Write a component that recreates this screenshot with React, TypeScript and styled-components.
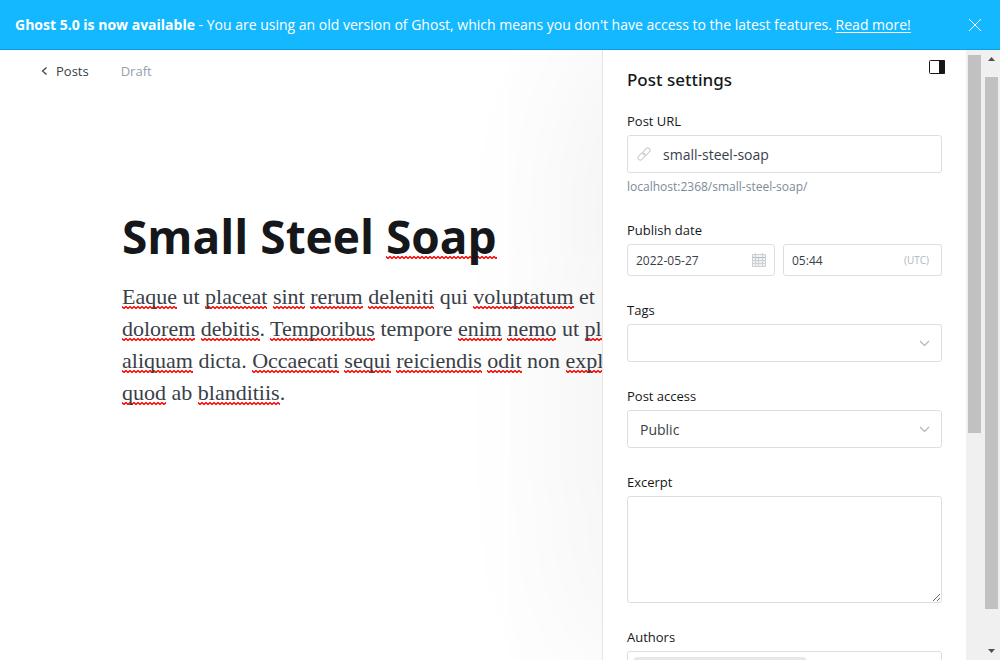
import React from "react";
import styled, { createGlobalStyle } from "styled-components";

const GlobalStyle = createGlobalStyle`
  *, *::before, *::after { box-sizing: border-box; }
  body {
    margin: 0;
    background: #fff;
    color: #15171a;
    font-family: "Open Sans", "Noto Sans", sans-serif;
    font-size: 13px;
  }
  button, input, select, textarea { font: inherit; color: inherit; }
`;

const Screen = styled.div`
  display: flex;
  flex-direction: column;
  height: 100vh;
  overflow: hidden;
`;

const Banner = styled.header`
  position: relative;
  z-index: 2;
  display: flex;
  align-items: center;
  justify-content: space-between;
  flex: none;
  height: 50px;
  padding: 0 18px 0 15px;
  background: #14b8ff;
  border-bottom: 1px solid #0c9fe0;
  color: #fff;
  font-size: 14px;
  white-space: nowrap;
`;

const BannerText = styled.p`
  margin: 0;
  line-height: 20px;
  a { color: inherit; text-underline-offset: 2px; }
`;

const IconButton = styled.button`
  display: flex;
  padding: 0;
  border: 0;
  background: none;
  cursor: pointer;
`;

const Workspace = styled.div`
  display: flex;
  flex: 1;
  min-height: 0;
`;

const Editor = styled.main`
  flex: 1;
  min-width: 0;
  overflow: hidden;
`;

const EditorNav = styled.nav`
  display: flex;
  align-items: center;
  gap: 32px;
  height: 42px;
  padding-left: 41px;
`;

const BackLink = styled.a`
  display: flex;
  align-items: center;
  gap: 8px;
  color: #394047;
  font-weight: 500;
  text-decoration: none;
`;

const Status = styled.span`
  color: #95a1ad;
`;

const Article = styled.article`
  padding: 112px 0 0 122px;
  white-space: nowrap;
`;

const Title = styled.h1`
  margin: 0;
  font-size: 46px;
  line-height: 64px;
  font-weight: 700;
`;

const Body = styled.p`
  margin: 13px 0 0;
  color: #394047;
  font-family: "Liberation Serif", serif;
  font-size: 22px;
  line-height: 32px;
`;

const Misspelt = styled.span<{ $rise?: number }>`
  background-image: url("data:image/svg+xml,%3Csvg xmlns='http://www.w3.org/2000/svg' width='4' height='3'%3E%3Cpath d='M-1 -.5L2 2.500L5 -.5' fill='none' stroke='red' stroke-width='1.4'/%3E%3C/svg%3E");
  background-repeat: repeat-x;
  background-position: left 0 bottom ${(p) => p.$rise ?? 0}px;
`;

const PanelGroup = styled.div`
  position: relative;
  z-index: 1;
  display: flex;
  box-shadow: 0 0 180px rgba(0, 0, 0, 0.08);
`;

const Panel = styled.aside`
  flex: none;
  width: 364px;
  overflow: hidden;
  background: #fff;
  border-left: 1px solid #e5e5e5;
`;

const PanelHeader = styled.div`
  display: flex;
  justify-content: space-between;
  align-items: flex-start;
  padding: 10px 21px 0 24px;
`;

const PanelTitle = styled.h2`
  margin: 8px 0 0;
  font-family: "Noto Sans", sans-serif;
  font-size: 17px;
  line-height: 24px;
  font-weight: 500;
`;

const Form = styled.form`
  display: flex;
  flex-direction: column;
  gap: 25px;
  padding: 20px 24px 0;
`;

const Field = styled.div`
  display: flex;
  flex-direction: column;
  gap: 5px;
`;

const Label = styled.label`
  font-size: 13px;
  line-height: 18px;
  font-weight: 500;
`;

const Control = styled.div<{ $small?: boolean }>`
  display: flex;
  align-items: center;
  gap: ${(p) => (p.$small ? 4 : 12)}px;
  height: ${(p) => (p.$small ? 32 : 38)}px;
  padding: ${(p) => (p.$small ? "0 8px" : "0 11px 0 9px")};
  border: 1px solid #dddedf;
  border-radius: 3px;
  color: #394047;
  font-size: ${(p) => (p.$small ? 12 : 14)}px;
`;

const TextInput = styled.input`
  flex: 1;
  min-width: 0;
  width: 100%;
  padding: 0;
  border: 0;
  outline: 0;
  background: none;
`;

const Select = styled.select`
  flex: 1;
  padding: 0 0 0 3px;
  border: 0;
  outline: 0;
  background: none;
  appearance: none;
`;

const Hint = styled.p`
  margin: 0;
  color: #7c8b9a;
  font-size: 12px;
  line-height: 18px;
`;

const DateRow = styled.div`
  display: grid;
  grid-template-columns: 148fr 159fr;
  gap: 8px;
`;

const Zone = styled.small`
  padding-right: 4px;
  color: #aeb7c1;
  font-size: 10px;
`;

const Excerpt = styled.textarea`
  display: block;
  height: 107px;
  border: 1px solid #dddedf;
  border-radius: 3px;
  outline: 0;
  resize: vertical;
`;

const AuthorBox = styled.div`
  height: 38px;
  padding: 5px 6px;
  border: 1px solid #dddedf;
  border-radius: 3px;
`;

const AuthorToken = styled.div`
  width: 172px;
  height: 26px;
  background: #e5e7e9;
  border-radius: 3px;
`;

const Track = styled.div<{ $arrows?: boolean }>`
  display: flex;
  flex-direction: column;
  align-items: center;
  gap: 16px;
  width: 17px;
  padding: ${(p) => (p.$arrows ? "7px 0" : "5px 0 0")};
  background: #f0f0f0;
  svg { flex: none; }
  svg:last-child { margin-top: auto; }
`;

const Thumb = styled.div<{ $share: number }>`
  flex: 0 0 ${(p) => p.$share}%;
  width: 13px;
  background: #c1c1c1;
`;

const Chevron = () => (
  <svg width="11" height="7" viewBox="0 0 11 7" fill="none" stroke="#aeb7c1" strokeWidth="1.2">
    <path d="M1 1 5.500 5.500 10 1" />
  </svg>
);

const LinkIcon = () => (
  <svg width="14" height="14" viewBox="0 0 14 14" fill="none" stroke="#c8ccd1">
    <rect x="-4" y="-2.300" width="8" height="4.600" rx="2.300" transform="translate(4.500 9.500) rotate(-45)" />
    <rect x="-4" y="-2.300" width="8" height="4.600" rx="2.300" transform="translate(9.500 4.500) rotate(-45)" />
  </svg>
);

const CalendarIcon = () => (
  <svg width="14" height="14" viewBox="0 0 14 14" fill="none" stroke="#cdd1d5">
    <path d="M.5 1.500h13v12H.5z" fill="#f1f2f3" />
    <path d="M.5 4.500h13" stroke="#b4bac0" />
    <path d="M3.500 0v13M6.500 5v8M10.500 0v13M1 7.500h12M1 10.500h12" />
  </svg>
);

const W = Misspelt;

export default function App() {
  return (
    <Screen>
      <GlobalStyle />
      <Banner>
        <BannerText>
          <b>Ghost 5.0 is now available</b> - You are using an old version of Ghost, which means you don't have access to
          the latest features. <a href="#read-more">Read more!</a>
        </BannerText>
        <IconButton type="button" aria-label="Close">
          <svg width="14" height="14" viewBox="0 0 14 14" stroke="#fff" fill="none">
            <path d="M1 1 13 13M13 1 1 13" />
          </svg>
        </IconButton>
      </Banner>
      <Workspace>
        <Editor>
          <EditorNav>
            <BackLink href="#posts">
              <svg width="7" height="8" viewBox="0 0 7 8" fill="none" stroke="#394047" strokeWidth="1.2">
                <path d="M5.5 .5 1.5 4 5.5 7.5" />
              </svg>
              Posts
            </BackLink>
            <Status>Draft</Status>
          </EditorNav>
          <Article>
            <Title>
              Small Steel <W $rise={8}>Soap</W>
            </Title>
            <Body>
              <W>Eaque</W> ut <W>placeat</W> <W>sint</W> <W>rerum</W> <W>deleniti</W> qui <W>voluptatum</W> et
              <br />
              <W>dolorem</W> <W>debitis</W>. <W>Temporibus</W> tempore <W>enim</W> <W>nemo</W> ut <W>placeat</W>
              <br />
              <W>aliquam</W> dicta. <W>Occaecati</W> <W>sequi</W> <W>reiciendis</W> <W>odit</W> non <W>explicabo</W>
              <br />
              <W>quod</W> ab <W>blanditiis</W>.
            </Body>
          </Article>
        </Editor>
        <PanelGroup>
          <Panel>
            <PanelHeader>
              <PanelTitle>Post settings</PanelTitle>
              <IconButton type="button" aria-label="Toggle settings">
                <svg width="16" height="14" viewBox="0 0 16 14">
                  <rect x=".5" y=".5" width="15" height="13" rx="1" fill="#fff" stroke="#15171a" />
                  <path d="M10 0h5a1 1 0 0 1 1 1v12a1 1 0 0 1-1 1h-5z" fill="#15171a" />
                </svg>
              </IconButton>
            </PanelHeader>
            <Form>
              <Field>
                <Label htmlFor="url">Post URL</Label>
                <Control>
                  <LinkIcon />
                  <TextInput id="url" defaultValue="small-steel-soap" spellCheck={false} />
                </Control>
                <Hint>localhost:2368/small-steel-soap/</Hint>
              </Field>
              <Field>
                <Label htmlFor="date">Publish date</Label>
                <DateRow>
                  <Control $small>
                    <TextInput id="date" defaultValue="2022-05-27" />
                    <CalendarIcon />
                  </Control>
                  <Control $small>
                    <TextInput aria-label="Publish time" defaultValue="05:44" />
                    <Zone>(UTC)</Zone>
                  </Control>
                </DateRow>
              </Field>
              <Field>
                <Label htmlFor="tags">Tags</Label>
                <Control>
                  <TextInput id="tags" />
                  <Chevron />
                </Control>
              </Field>
              <Field>
                <Label htmlFor="access">Post access</Label>
                <Control>
                  <Select id="access" defaultValue="public">
                    <option value="public">Public</option>
                  </Select>
                  <Chevron />
                </Control>
              </Field>
              <Field>
                <Label htmlFor="excerpt">Excerpt</Label>
                <Excerpt id="excerpt" />
              </Field>
              <Field>
                <Label as="span">Authors</Label>
                <AuthorBox>
                  <AuthorToken />
                </AuthorBox>
              </Field>
            </Form>
          </Panel>
          <Track>
            <Thumb $share={62.5} />
          </Track>
          <Track $arrows>
            <svg width="7" height="4" viewBox="0 0 7 4"><path d="M0 4 3.500 0 7 4z" fill="#505050" /></svg>
            <Thumb $share={89.3} />
            <svg width="7" height="4" viewBox="0 0 7 4"><path d="M0 0 3.500 4 7 0z" fill="#505050" /></svg>
          </Track>
        </PanelGroup>
      </Workspace>
    </Screen>
  );
}
